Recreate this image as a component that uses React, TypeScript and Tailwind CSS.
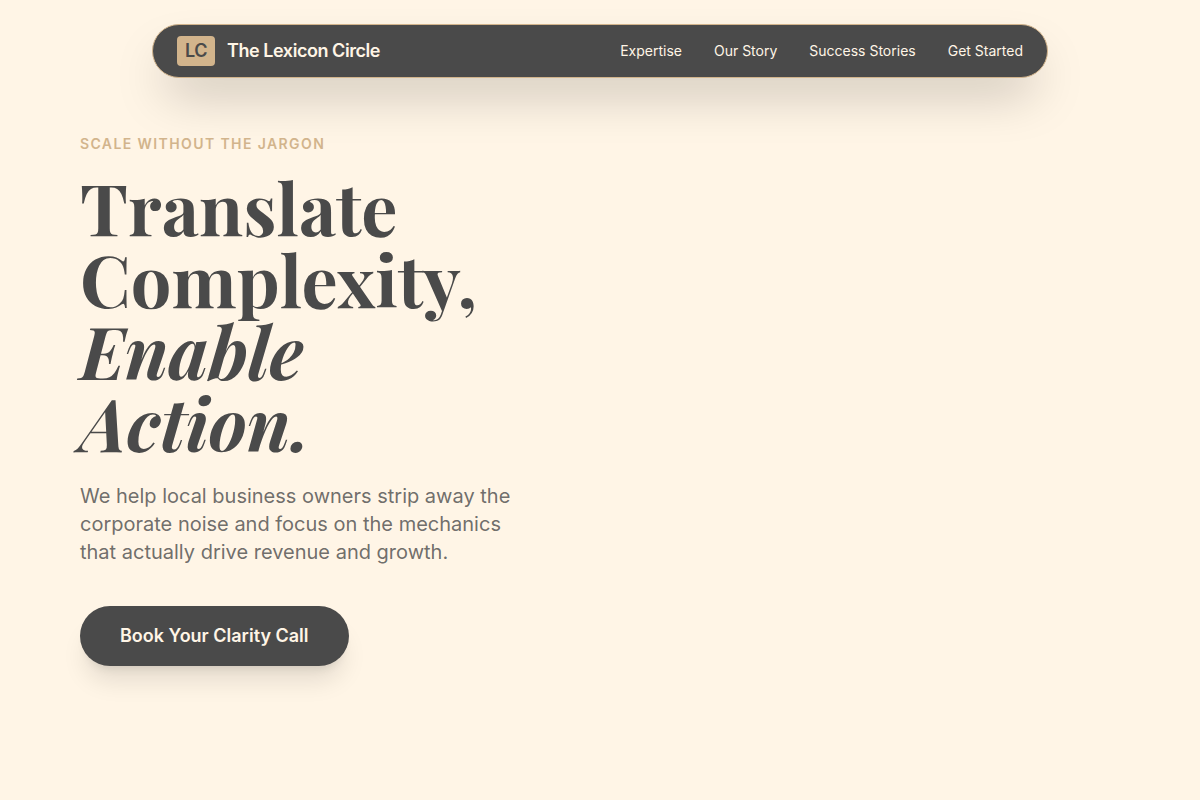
const navLinks = [
  { label: "Expertise", href: "#expertise" },
  { label: "Our Story", href: "#story" },
  { label: "Success Stories", href: "#success" },
  { label: "Get Started", href: "#start" },
];

function Navbar() {
  return (
    <header className="px-6 pt-6">
      <nav className="mx-auto flex max-w-4xl items-center justify-between rounded-full border border-[#d2b48c] bg-[#4a4a4a] px-6 py-[11px] shadow-2xl">
        <a href="#top" className="flex items-center gap-3 text-lg font-semibold tracking-tight">
          <span className="rounded bg-[#d2b48c] px-2 leading-[30px] text-[#4a4a4a]">LC</span>
          <span className="text-[#fff5e6]">The Lexicon Circle</span>
        </a>
        <div className="flex items-center gap-8">
          {navLinks.map((link) => (
            <a key={link.href} href={link.href} className="text-sm text-[#fff5e6] transition-colors hover:text-[#d2b48c]">
              {link.label}
            </a>
          ))}
        </div>
      </nav>
    </header>
  );
}

function Hero() {
  return (
    <main className="px-20 pt-14">
      <div className="max-w-lg">
        <p className="text-sm font-semibold tracking-widest text-[#d2b48c] uppercase">Scale Without the Jargon</p>
        <h1 className="mt-4 font-['Playfair_Display','Liberation_Serif',serif] text-7xl leading-none font-bold">
          Translate
          <br />
          Complexity,
          <br />
          <em>
            Enable
            <br />
            Action.
          </em>
        </h1>
        <p className="mt-6 max-w-md text-xl leading-7 text-[#4a4a4a]/80">
          We help local business owners strip away the corporate noise and focus on the mechanics that actually drive
          revenue and growth.
        </p>
        <button
          type="button"
          className="mt-10 rounded-full bg-[#4a4a4a] px-10 py-4 text-lg leading-7 font-semibold text-[#fff5e6] shadow-xl transition-colors hover:bg-[#333333]"
        >
          Book Your Clarity Call
        </button>
      </div>
    </main>
  );
}

export default function App() {
  return (
    <div id="top" className="min-h-screen bg-[#fff5e6] font-['Inter',sans-serif] text-[#4a4a4a]">
      <Navbar />
      <Hero />
    </div>
  );
}
